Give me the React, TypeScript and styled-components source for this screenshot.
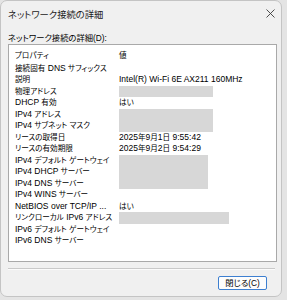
import styled, { createGlobalStyle } from 'styled-components';

const GlobalStyle = createGlobalStyle`
  html, body {
    margin: 0;
    padding: 0;
    background: #e4e4e4;
  }
  body {
    font-family: "Liberation Sans", "Noto Sans CJK JP", sans-serif;
    font-feature-settings: "palt";
    -webkit-font-smoothing: antialiased;
  }
`;

const Window = styled.div`
  width: 282px;
  height: 297px;
  box-sizing: border-box;
  background: #f0f0f0;
  border: 1px solid #c4c4c4;
  border-radius: 7px;
  display: flex;
  flex-direction: column;
  overflow: hidden;
`;

const TitleBar = styled.div`
  height: 25px;
  display: flex;
  align-items: center;
  justify-content: space-between;
  padding: 0 5px 0 7px;
  color: #1a1a1a;
  font-size: 9.3px;
`;

const CloseBtn = styled.div`
  width: 12px;
  height: 12px;
  display: flex;
  align-items: center;
  justify-content: center;
`;

const Body = styled.div`
  flex: 1;
  display: flex;
  flex-direction: column;
  padding: 0 4px 0 7px;
`;

const Label = styled.div`
  font-size: 8.3px;
  line-height: 11px;
  height: 11px;
  margin-top: 7px;
  color: #000;
`;

const ListBox = styled.div`
  height: 218px;
  box-sizing: border-box;
  background: #fff;
  border: 1px solid #a9a9a9;
  display: flex;
  flex-direction: column;
`;

const Row = styled.div<{ $header?: boolean }>`
  display: grid;
  grid-template-columns: 110px 1fr;
  height: ${(p) => (p.$header ? '17.5px' : '11.5px')};
  align-items: ${(p) => (p.$header ? 'end' : 'stretch')};
  padding-bottom: ${(p) => (p.$header ? '1.5px' : '0')};
  box-sizing: border-box;
  font-size: 8.5px;
  line-height: 11.5px;
  color: #000;
  white-space: nowrap;
`;

const Cjk = styled.span`
  font-size: 7.6px;
`;

const Name = styled.span`
  padding-left: 6px;
`;

const Value = styled.span`
  display: block;
`;

const Redacted = styled.span<{ $w: number }>`
  display: block;
  width: ${(p) => p.$w}px;
  height: 11.5px;
  background: #d7d7d7;
`;

const Separator = styled.div`
  margin-top: 6px;
  margin-right: 2px;
  height: 1px;
  background: #c9c9c9;
  border-bottom: 1px solid #fbfbfb;
`;

const Footer = styled.div`
  display: flex;
  justify-content: flex-end;
  padding: 6px 10px 0 0;
`;

const Button = styled.button`
  width: 49px;
  height: 14px;
  padding: 0;
  box-sizing: border-box;
  border: 1px solid #3d7fd0;
  border-radius: 2px;
  background: #fdfdfd;
  font-family: inherit;
  font-feature-settings: "palt";
  font-size: 8.3px;
  line-height: 12px;
  color: #000;
`;

type Item = { name: string; value?: string; hidden?: number };

const items: Item[] = [
  { name: '接続固有 DNS サフィックス' },
  { name: '説明', value: 'Intel(R) Wi-Fi 6E AX211 160MHz' },
  { name: '物理アドレス', hidden: 94 },
  { name: 'DHCP 有効', value: 'はい' },
  { name: 'IPv4 アドレス', hidden: 94 },
  { name: 'IPv4 サブネット マスク', hidden: 94 },
  { name: 'リースの取得日', value: '2025年9月1日 9:55:42' },
  { name: 'リースの有効期限', value: '2025年9月2日 9:54:29' },
  { name: 'IPv4 デフォルト ゲートウェイ', hidden: 89 },
  { name: 'IPv4 DHCP サーバー', hidden: 89 },
  { name: 'IPv4 DNS サーバー', hidden: 89 },
  { name: 'IPv4 WINS サーバー' },
  { name: 'NetBIOS over TCP/IP ...', value: 'はい' },
  { name: 'リンクローカル IPv6 アドレス', hidden: 110 },
  { name: 'IPv6 デフォルト ゲートウェイ' },
  { name: 'IPv6 DNS サーバー' },
];

function Mixed({ text }: { text: string }) {
  const parts = text.split(/([\u3000-\u9fff\uff00-\uffef]+)/).filter(Boolean);
  return (
    <>
      {parts.map((p, i) =>
        /[\u3000-\u9fff\uff00-\uffef]/.test(p) ? <Cjk key={i}>{p}</Cjk> : <span key={i}>{p}</span>
      )}
    </>
  );
}

export default function App() {
  return (
    <>
      <GlobalStyle />
      <Window>
        <TitleBar>
          <span>ネットワーク接続の詳細</span>
          <CloseBtn>
            <svg width="9" height="9" viewBox="0 0 9 9">
              <path d="M0.5 0.5 L8.5 8.5 M8.5 0.5 L0.5 8.5" stroke="#3a3a3a" strokeWidth="0.9" />
            </svg>
          </CloseBtn>
        </TitleBar>
        <Body>
          <Label>ネットワーク接続の詳細(D):</Label>
          <ListBox>
            <Row $header>
              <Name><Mixed text="プロパティ" /></Name>
              <Value><Mixed text="値" /></Value>
            </Row>
            {items.map((it) => (
              <Row key={it.name}>
                <Name><Mixed text={it.name} /></Name>
                {it.hidden ? (
                  <Redacted $w={it.hidden} />
                ) : (
                  <Value>{it.value && <Mixed text={it.value} />}</Value>
                )}
              </Row>
            ))}
          </ListBox>
          <Separator />
          <Footer>
            <Button>閉じる(C)</Button>
          </Footer>
        </Body>
      </Window>
    </>
  );
}
